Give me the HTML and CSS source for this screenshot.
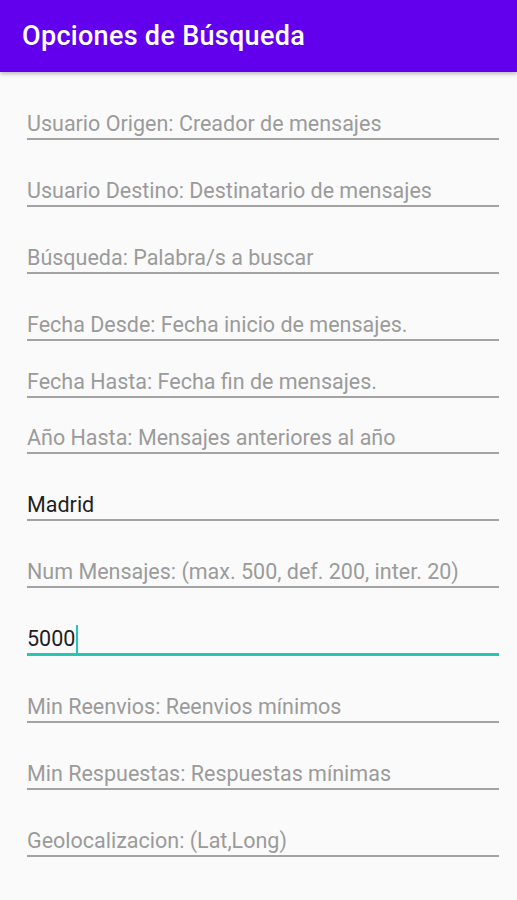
FILE: index.html
```html
<!DOCTYPE html>
<html lang="es">
<head>
  <meta charset="UTF-8">
  <meta name="viewport" content="width=device-width, initial-scale=1.0">
  <title>Opciones de Búsqueda</title>
  <link rel="stylesheet" href="styles.css">
</head>
<body>
  <header class="app-bar">
    <h1>Opciones de Búsqueda</h1>
  </header>

  <form class="search-form">
    <div class="field"><span class="hint">Usuario Origen: Creador de mensajes</span></div>
    <div class="field"><span class="hint">Usuario Destino: Destinatario de mensajes</span></div>
    <div class="field"><span class="hint">Búsqueda: Palabra/s a buscar</span></div>
    <div class="field"><span class="hint">Fecha Desde: Fecha inicio de mensajes.</span></div>
    <div class="field compact"><span class="hint">Fecha Hasta: Fecha fin de mensajes.</span></div>
    <div class="field compact tight"><span class="hint">Año Hasta: Mensajes anteriores al año</span></div>
    <div class="field"><span class="value">Madrid</span></div>
    <div class="field"><span class="hint">Num Mensajes: (max. 500, def. 200, inter. 20)</span></div>
    <div class="field focused"><span class="value">5000</span><span class="caret"></span></div>
    <div class="field"><span class="hint">Min Reenvios: Reenvios mínimos</span></div>
    <div class="field"><span class="hint">Min Respuestas: Respuestas mínimas</span></div>
    <div class="field"><span class="hint">Geolocalizacion: (Lat,Long)</span></div>
  </form>
</body>
</html>
```

FILE: styles.css
```css
* {
  box-sizing: border-box;
}

body {
  margin: 0;
  background: #fafafa;
  font-family: Roboto, "Noto Sans", sans-serif;
}

/* barra superior */
.app-bar {
  height: 72px;
  padding: 0 22px;
  display: flex;
  align-items: center;
  background: #6200ee;
  box-shadow: 0 2px 4px rgba(0, 0, 0, .25);
  position: relative;
}

.app-bar h1 {
  margin: 0;
  color: #fff;
  font-size: 27px;
  font-weight: 500;
  letter-spacing: .3px;
}

/* formulario */
.search-form {
  padding: 1px 18px 0 27px;
}

.field {
  display: flex;
  align-items: center;
  height: 67px;
  padding-top: 39px;
  padding-bottom: 2px;
  border-bottom: 2px solid #a3a3a3;
  font-size: 21.5px;
  line-height: 24px;
}

.field.compact {
  height: 57px;
  padding-top: 29px;
}
.field.compact.tight {height: 56px; padding-top: 28px;}

.hint {
  color: #9b9b9b;
}

.value {
  color: #1e1e1e;
}

.field.focused {
  border-bottom: 3px solid #26c6b6;
  height: 68px;
}

.caret {
  width: 2px;
  height: 29px;
  margin-left: 1px;
  background: #26c6b6;
}
```
